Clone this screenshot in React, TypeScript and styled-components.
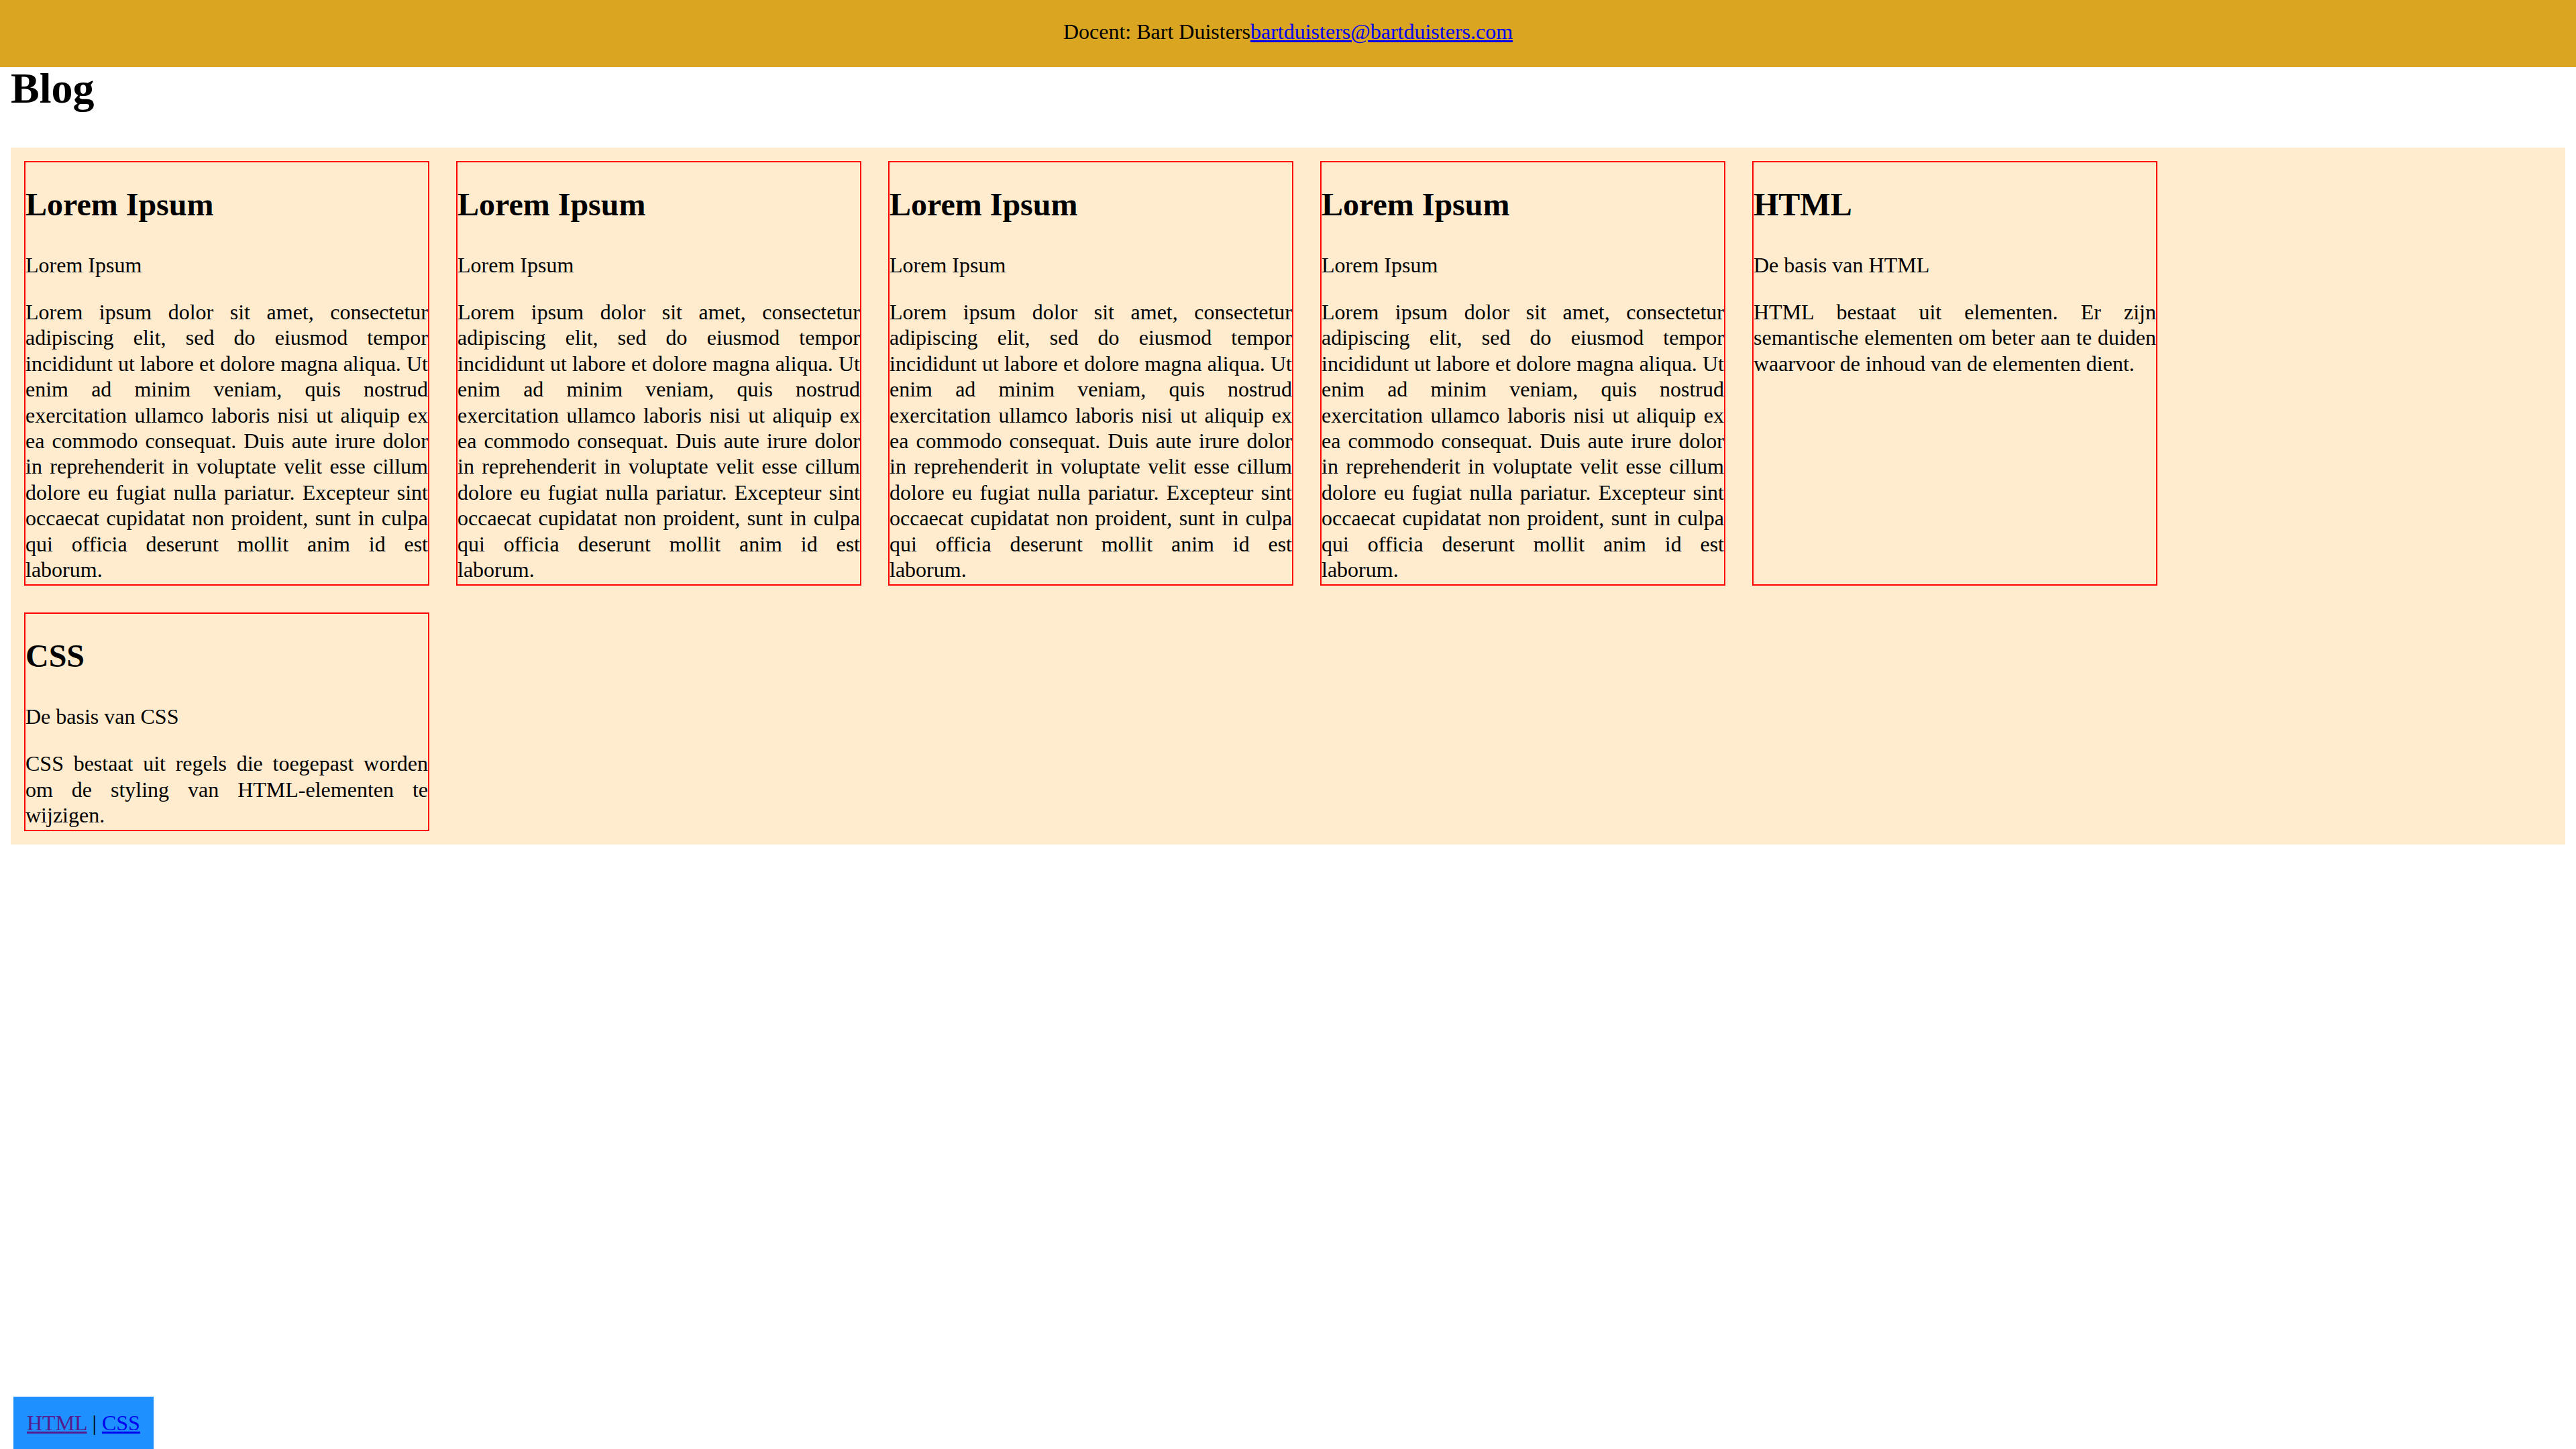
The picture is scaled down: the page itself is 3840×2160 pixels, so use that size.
import styled, { createGlobalStyle } from "styled-components";

const GlobalStyle = createGlobalStyle`
  body {
    margin: 0;
    font-family: "Liberation Serif", "Times New Roman", serif;
    font-size: 32px;
    line-height: 1.2;
    color: #000;
    background: #fff;
  }
  a {
    color: #0000ee;
  }
`;

type Post = {
  title: string;
  subtitle: string;
  body: string;
};

const lorem =
  "Lorem ipsum dolor sit amet, consectetur adipiscing elit, sed do eiusmod tempor incididunt ut labore et dolore magna aliqua. Ut enim ad minim veniam, quis nostrud exercitation ullamco laboris nisi ut aliquip ex ea commodo consequat. Duis aute irure dolor in reprehenderit in voluptate velit esse cillum dolore eu fugiat nulla pariatur. Excepteur sint occaecat cupidatat non proident, sunt in culpa qui officia deserunt mollit anim id est laborum.";

const posts: Post[] = [
  { title: "Lorem Ipsum", subtitle: "Lorem Ipsum", body: lorem },
  { title: "Lorem Ipsum", subtitle: "Lorem Ipsum", body: lorem },
  { title: "Lorem Ipsum", subtitle: "Lorem Ipsum", body: lorem },
  { title: "Lorem Ipsum", subtitle: "Lorem Ipsum", body: lorem },
  {
    title: "HTML",
    subtitle: "De basis van HTML",
    body: "HTML bestaat uit elementen. Er zijn semantische elementen om beter aan te duiden waarvoor de inhoud van de elementen dient.",
  },
  {
    title: "CSS",
    subtitle: "De basis van CSS",
    body: "CSS bestaat uit regels die toegepast worden om de styling van HTML-elementen te wijzigen.",
  },
];

export default function App() {
  return (
    <>
      <GlobalStyle />
      <Header>
        Docent: Bart Duisters
        <a href="mailto:bartduisters@bartduisters.com">bartduisters@bartduisters.com</a>
      </Header>
      <Content>
        <Title>Blog</Title>
        <Posts>
          {posts.map((post, i) => (
            <Card key={i}>
              <CardTitle>{post.title}</CardTitle>
              <Subtitle>{post.subtitle}</Subtitle>
              <Body>{post.body}</Body>
            </Card>
          ))}
        </Posts>
      </Content>
      <Footer>
        <Visited href="#html">HTML</Visited> | <a href="#css">CSS</a>
      </Footer>
    </>
  );
}

const Header = styled.header`
  background-color: #daa520;
  text-align: center;
  padding: 28px 0 33.6px;
  line-height: 38.4px;
`;

const Content = styled.main`
  padding: 0 16px;
`;

const Title = styled.h1`
  font-size: 64px;
  line-height: 64px;
  margin: 0 0 56px;
`;

const Posts = styled.section`
  display: flex;
  flex-wrap: wrap;
  gap: 40px;
  padding: 20px;
  background-color: #ffebcd;
`;

const Card = styled.article`
  width: 600px;
  border: 2px solid #ff0000;
  padding-bottom: 3px;
`;

const CardTitle = styled.h2`
  font-size: 48px;
  line-height: 57.6px;
  margin: 34px 0 42px;
`;

const Subtitle = styled.p`
  margin: 0 0 32px;
`;

const Body = styled.p`
  margin: 0;
  text-align: justify;
`;

const Footer = styled.footer`
  position: fixed;
  left: 20px;
  bottom: 0;
  padding: 20px;
  background-color: #1e90ff;
`;

const Visited = styled.a`
  color: #551a8b;
`;
